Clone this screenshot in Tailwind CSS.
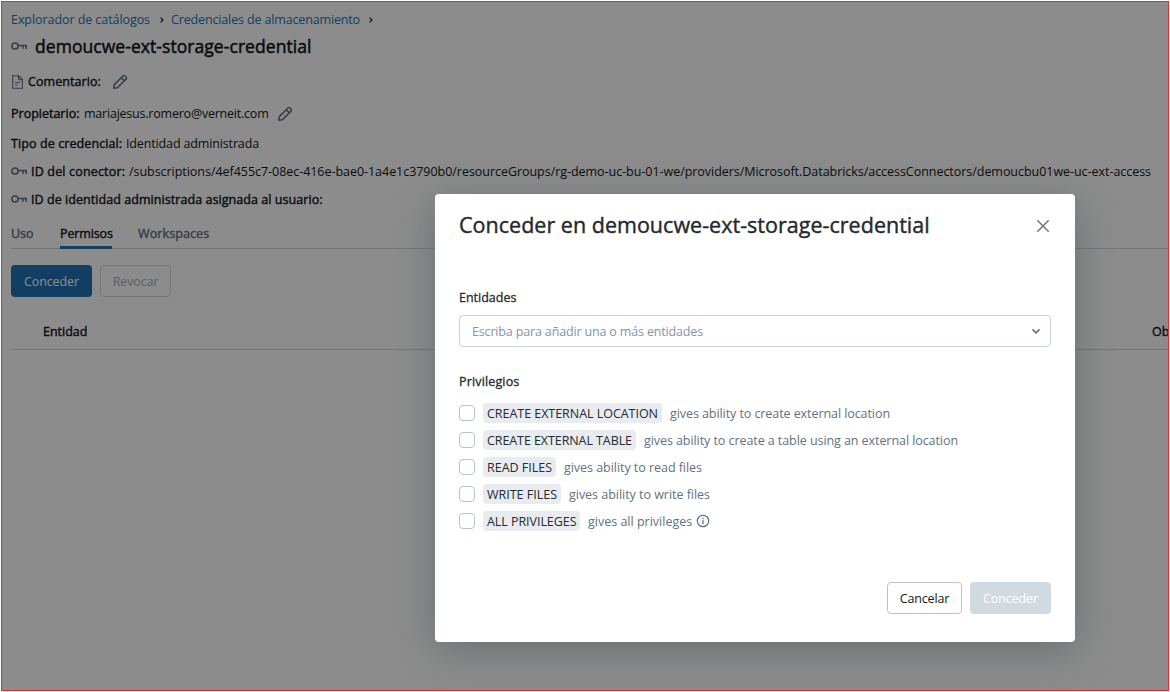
<!DOCTYPE html>
<html lang="es">
<head>
<meta charset="utf-8">
<title>demoucwe-ext-storage-credential</title>
<script src="https://cdn.jsdelivr.net/npm/@tailwindcss/browser@4"></script>
</head>
<body class="relative h-[692px] w-[1170px] overflow-hidden bg-white font-['Open_Sans','Noto_Sans',sans-serif] text-[12.5px] leading-5 text-[#11171c]">
<svg class="hidden">
  <symbol id="key" viewBox="0 0 16 16"><g fill="none" stroke="currentColor" stroke-width="1.5"><circle cx="4" cy="8" r="3.1"/><path d="M7 7.5h9M12 7.5v3.2M15.2 7.5v3.5"/></g></symbol>
  <symbol id="pencil" viewBox="0 0 16 16"><path d="M1.8 14.2l.5-3.6 8.6-8.6a1.5 1.5 0 0 1 2.1 0l1 1a1.5 1.5 0 0 1 0 2.1l-8.6 8.6zM9.2 3.7l3.1 3.1" fill="none" stroke="currentColor" stroke-width="1.5" stroke-linejoin="round"/></symbol>
  <symbol id="chev" viewBox="0 0 6 8"><path d="M1.5 1.7L4 4 1.5 6.3" fill="none" stroke="currentColor" stroke-width="1.1"/></symbol>
</svg>

<div class="mt-px ml-px flex h-[690px] w-[1168px] flex-col overflow-hidden border border-transparent bg-white pl-[9px] whitespace-nowrap">
  <nav class="mt-2 flex h-5 items-center text-[#2272b4]">
    <span class="w-[148px] tracking-[-0.069px]">Explorador de catálogos</span>
    <svg class="mr-[6px] h-2 w-1.5 text-[#11171c]"><use href="#chev"/></svg>
    <span class="w-[197px] tracking-[-0.145px]">Credenciales de almacenamiento</span>
    <svg class="h-2 w-1.5 text-[#11171c]"><use href="#chev"/></svg>
  </nav>
  <h1 class="mt-0.5 flex h-7 items-center text-[17.5px] tracking-[0.06px] [-webkit-text-stroke:0.5px]">
    <svg class="mr-2 h-4 w-4 text-[#5f7281]"><use href="#key"/></svg><span>demoucwe-ext-storage-credential</span>
  </h1>
  <div class="mt-3 flex h-5 items-center">
    <svg class="mr-[3px] h-[14px] w-[14px] text-[#5f7281]" viewBox="0 0 14 14"><path d="M1.7.8h6l3.7 3.7v8.7H1.7zM7.5.8v4h4M4 7.5h5M4 10h3" fill="none" stroke="currentColor" stroke-width="1.1"/></svg>
    <span class="w-[84px] tracking-[0.07px] [-webkit-text-stroke:0.4px]">Comentario:</span>
    <svg class="h-4 w-4 text-[#5f7281]"><use href="#pencil"/></svg>
  </div>
  <div class="mt-3 flex h-5 items-center">
    <span class="w-[73px] [-webkit-text-stroke:0.4px]">Propietario:</span>
    <span class="w-[193px] tracking-[-0.219px]">mariajesus.romero@verneit.com</span>
    <svg class="h-4 w-4 text-[#5f7281]"><use href="#pencil"/></svg>
  </div>
  <div class="mt-[10px] flex h-5 items-center">
    <span class="w-[115px] tracking-[0.1px] [-webkit-text-stroke:0.4px]">Tipo de credencial:</span>
    <span class="tracking-[-0.143px]">Identidad administrada</span>
  </div>
  <div class="mt-2 flex h-5 items-center">
    <svg class="mr-1 mb-0.5 h-4 w-4 text-[#5f7281]"><use href="#key"/></svg>
    <span class="w-[98px] tracking-[0.17px] [-webkit-text-stroke:0.4px]">ID del conector:</span>
    <span class="tracking-[-0.041px]">/subscriptions/4ef455c7-08ec-416e-bae0-1a4e1c3790b0/resourceGroups/rg-demo-uc-bu-01-we/providers/Microsoft.Databricks/accessConnectors/demoucbu01we-uc-ext-access</span>
  </div>
  <div class="mt-2 flex h-5 items-center">
    <svg class="mr-1 mb-0.5 h-4 w-4 text-[#5f7281]"><use href="#key"/></svg>
    <span class="tracking-[0.06px] [-webkit-text-stroke:0.4px]">ID de identidad administrada asignada al usuario:</span>
  </div>
  <div class="mt-[11px] flex h-[28px] gap-[26px] border-b border-[#d1d9e1] pt-[3px] text-[#5f7281] [-webkit-text-stroke:0.4px]">
    <span class="w-[23px]">Uso</span>
    <span class="h-[25px] w-[52px] border-b-[3px] border-[#2272b4] tracking-[-0.12px] text-[#11171c]">Permisos</span>
    <span class="tracking-[0.1px]">Workspaces</span>
  </div>
  <div class="mt-4 flex h-8 gap-2">
    <button class="w-[81px] rounded bg-[#2272b4] pt-0.5 tracking-[-0.105px] text-white">Conceder</button>
    <button class="w-[71px] rounded border border-[#d1d9e1] pt-0.5 tracking-[-0.15px] text-[#a3aeb8]">Revocar</button>
  </div>
  <div class="mt-4 flex h-[37px] items-center justify-between border-b border-[#d1d9e1] pt-0.5 pl-8 [-webkit-text-stroke:0.4px]">
    <span>Entidad</span><span class="w-[16px]">Ob</span>
  </div>
</div>

<div class="absolute top-px left-px h-[690px] w-[1168px] overflow-hidden border border-[#ff2020] bg-black/45">
  <section role="dialog" class="absolute top-[192px] left-[433px] flex h-[448px] w-[640px] flex-col rounded bg-white px-6 whitespace-nowrap shadow-[0_8px_40px_rgba(27,49,57,0.3)]">
    <header class="flex h-16 items-center justify-between">
      <h2 class="mb-0.5 text-[21.5px] tracking-[0.02px] text-[#252a2e] [-webkit-text-stroke:0.4px]">Conceder en demoucwe-ext-storage-credential</h2>
      <svg class="h-4 w-4 text-[#5f7281]" viewBox="0 0 16 16"><path d="M2.3 2.3l11.4 11.4M13.7 2.3L2.3 13.7" stroke="currentColor" stroke-width="1.4"/></svg>
    </header>
    <label class="mt-[30px] h-5 text-[#252a2e] [-webkit-text-stroke:0.3px]">Entidades</label>
    <div class="mt-[7px] flex h-8 items-center justify-between rounded border border-[#c6d3de] pr-2 pl-3 text-[#8396a5]">
      <span class="pt-0.5 tracking-[-0.157px]">Escriba para añadir una o más entidades</span>
      <svg class="h-3 w-3 text-[#5f7281]" viewBox="0 0 12 12"><path d="M2.5 4.4L6 7.8l3.5-3.4" fill="none" stroke="currentColor" stroke-width="1.6"/></svg>
    </div>
    <div class="mt-[25px] h-5 tracking-[0.15px] text-[#252a2e] [-webkit-text-stroke:0.3px]">Privilegios</div>
    <ul class="mt-[11px] flex flex-col gap-[7px] text-[#5f7281]">
      <li class="flex h-5 items-center"><i class="mr-2 h-4 w-4 rounded border border-[#b4c5d3]"></i><b class="mr-2 h-5 w-[179px] rounded bg-[#e8ecf0] px-1 leading-[21px] font-normal tracking-[-0.036px] text-[#252a2e]">CREATE EXTERNAL LOCATION</b><span class="leading-[21px] tracking-[-0.074px]">gives ability to create external location</span></li>
      <li class="flex h-5 items-center"><i class="mr-2 h-4 w-4 rounded border border-[#b4c5d3]"></i><b class="mr-2 h-5 w-[153px] rounded bg-[#e8ecf0] px-1 leading-[21px] font-normal tracking-[-0.079px] text-[#252a2e]">CREATE EXTERNAL TABLE</b><span class="leading-[21px] tracking-[-0.069px]">gives ability to create a table using an external location</span></li>
      <li class="flex h-5 items-center"><i class="mr-2 h-4 w-4 rounded border border-[#b4c5d3]"></i><b class="mr-2 h-5 w-[73px] rounded bg-[#e8ecf0] px-1 leading-[21px] font-normal tracking-[-0.016px] text-[#252a2e]">READ FILES</b><span class="leading-[21px] tracking-[-0.042px]">gives ability to read files</span></li>
      <li class="flex h-5 items-center"><i class="mr-2 h-4 w-4 rounded border border-[#b4c5d3]"></i><b class="mr-2 h-5 w-[78px] rounded bg-[#e8ecf0] px-1 leading-[21px] font-normal tracking-[-0.009px] text-[#252a2e]">WRITE FILES</b><span class="leading-[21px] tracking-[-0.03px]">gives ability to write files</span></li>
      <li class="flex h-5 items-center"><i class="mr-2 h-4 w-4 rounded border border-[#b4c5d3]"></i><b class="mr-2 h-5 w-[97px] rounded bg-[#e8ecf0] px-1 leading-[21px] font-normal tracking-[-0.052px] text-[#252a2e]">ALL PRIVILEGES</b><span class="w-[108px] leading-[21px]">gives all privileges</span><svg class="h-[14px] w-[14px]" viewBox="0 0 14 14"><circle cx="7" cy="7" r="5.7" fill="none" stroke="currentColor" stroke-width="1.2"/><path d="M7 6.2v4M7 3.8v1.3" stroke="currentColor" stroke-width="1.3"/></svg></li>
    </ul>
    <footer class="mt-[51px] flex h-8 justify-end gap-2">
      <button class="w-[75px] rounded border border-[#b4c5d3] pt-0.5 tracking-[-0.15px]">Cancelar</button>
      <button class="w-[81px] rounded bg-[#d1d9e1] pt-0.5 tracking-[-0.105px] text-white">Conceder</button>
    </footer>
  </section>
</div>
</body>
</html>
